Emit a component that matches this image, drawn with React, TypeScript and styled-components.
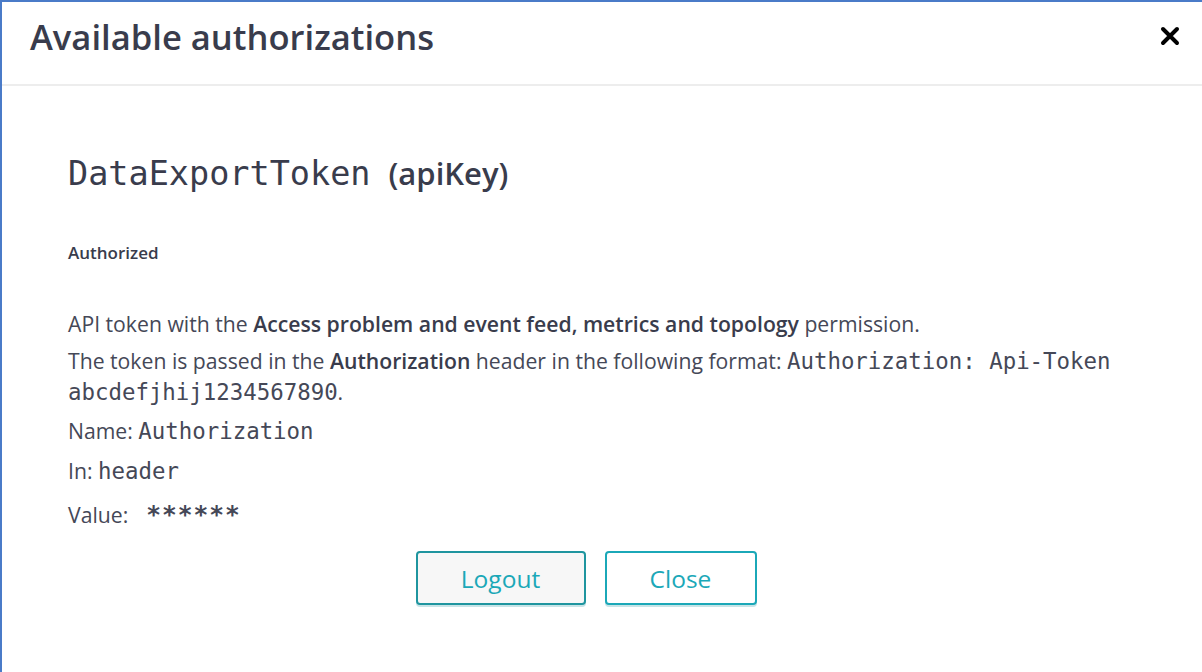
import styled, { createGlobalStyle } from "styled-components";

const GlobalStyle = createGlobalStyle`
  html, body {
    margin: 0;
    padding: 0;
    background: #ffffff;
  }
  * {
    box-sizing: border-box;
  }
`;

const Modal = styled.div`
  width: 1202px;
  height: 672px;
  background: #ffffff;
  border-top: 2px solid #4a7bc8;
  border-left: 2px solid #4a7bc8;
  font-family: "Open Sans", "Noto Sans", sans-serif;
  color: #3b3e4d;
  overflow: hidden;
`;

const Header = styled.div`
  display: flex;
  align-items: center;
  justify-content: space-between;
  height: 84px;
  padding: 0 22px 14px 28px;
  border-bottom: 2px solid #ededed;
`;

const Title = styled.h2`
  margin: 0;
  font-size: 34.6px;
  font-weight: 600;
  color: #393c4c;
`;

const CloseIcon = styled.button`
  display: flex;
  border: 0;
  padding: 0;
  background: none;
  cursor: pointer;
`;

const Body = styled.div`
  padding: 0 0 0 66px;
`;

const SchemeTitle = styled.h4`
  margin: 66px 0 0;
  font-size: 33.5px;
  line-height: 40px;
  font-weight: 500;
  color: #393c4c;

  code {
    font-family: "DejaVu Sans Mono", monospace;
  }
  span {
    font-size: 31px;
    font-weight: 600;
    margin-left: 18px;
  }
`;

const Status = styled.h6`
  margin: 49px 0 0;
  font-size: 17px;
  line-height: 20px;
  font-weight: 600;
  color: #393c4c;
`;

const Para = styled.p<{ $gap: number }>`
  margin: ${(p) => p.$gap}px 0 0;
  font-size: 21.2px;
  line-height: 31px;
  color: #454857;

  b {
    font-weight: 600;
    color: #393c4c;
  }
  code {
    font-family: "DejaVu Sans Mono", monospace;
    font-size: 22.4px;
    line-height: 1;
  }
`;

const Stars = styled.span`
  font-family: "DejaVu Sans Mono", monospace;
  font-size: 24.5px;
  font-weight: 700;
  margin-left: 18px;
  letter-spacing: 1px;
`;

const Actions = styled.div`
  display: flex;
  justify-content: center;
  gap: 19px;
  margin-top: 21px;
  padding-right: 98px;
`;

const Button = styled.button<{ $filled?: boolean }>`
  height: 54px;
  width: ${(p) => (p.$filled ? 170 : 152)}px;
  border: 2px solid ${(p) => (p.$filled ? "#1f959f" : "#1ba8b8")};
  border-radius: 4px;
  background: ${(p) => (p.$filled ? "#f7f7f7" : "#ffffff")};
  color: #1ba8b8;
  font-family: "Open Sans", "Noto Sans", sans-serif;
  font-size: 24.5px;
  box-shadow: 0 2px 0 rgba(31, 149, 159, 0.25);
  cursor: pointer;
`;

export default function App() {
  return (
    <>
      <GlobalStyle />
      <Modal>
        <Header>
          <Title>Available authorizations</Title>
          <CloseIcon aria-label="Close">
            <svg width="20" height="20" viewBox="0 0 20 20">
              <path d="M3 3 L17 17 M17 3 L3 17" stroke="#000" strokeWidth="4" strokeLinecap="round" />
            </svg>
          </CloseIcon>
        </Header>
        <Body>
          <SchemeTitle>
            <code>DataExportToken</code>
            <span>(apiKey)</span>
          </SchemeTitle>
          <Status>Authorized</Status>
          <Para $gap={45}>
            API token with the <b>Access problem and event feed, metrics and topology</b> permission.
          </Para>
          <Para $gap={6}>
            The token is passed in the <b>Authorization</b> header in the following format:{" "}
            <code>Authorization: Api-Token abcdefjhij1234567890</code>.
          </Para>
          <Para $gap={8}>
            Name: <code>Authorization</code>
          </Para>
          <Para $gap={9}>
            In: <code>header</code>
          </Para>
          <Para $gap={13}>
            Value:<Stars>******</Stars>
          </Para>
          <Actions>
            <Button $filled>Logout</Button>
            <Button>Close</Button>
          </Actions>
        </Body>
      </Modal>
    </>
  );
}
